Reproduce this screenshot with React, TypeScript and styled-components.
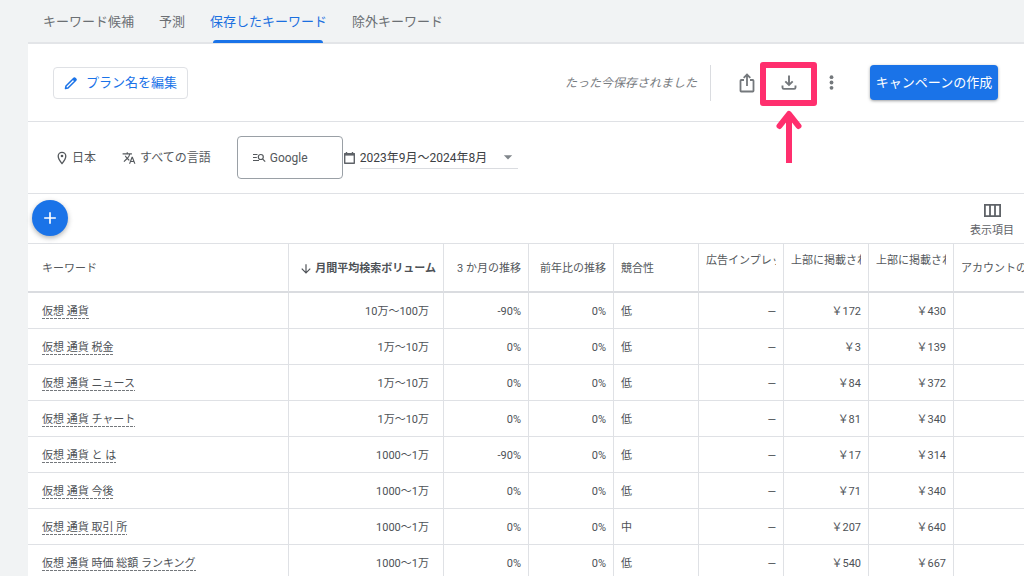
import React from "react";
import styled, { createGlobalStyle, css } from "styled-components";
import { MdAdd, MdArrowDownward, MdArrowDropDown, MdTranslate } from "react-icons/md";

const GlobalStyle = createGlobalStyle`
  *, *::before, *::after { box-sizing: border-box; }
  html { overflow: hidden; }
  body {
    margin: 0;
    background: #f1f3f4;
    color: #5f6368;
    font-family: Roboto, "Noto Sans CJK JP", sans-serif;
    font-size: 12px;
    line-height: 16px;
  }
  button, select { font: inherit; color: inherit; cursor: pointer; }
  svg { display: block; flex: none; }
`;

const Page = styled.div`
  height: 100vh;
  overflow: hidden;
  padding-left: 28px;
`;

const TabBar = styled.nav`
  display: flex;
  gap: 25px;
  height: 44px;
  padding: 0 15px;
  border-bottom: 2px solid #e3e5e8;
`;

const Tab = styled.a<{ $active?: boolean }>`
  position: relative;
  padding: 14px 0 12px;
  font-size: 13px;
  color: #6b6f73;
  text-decoration: none;
  white-space: nowrap;
  ${({ $active }) =>
    $active &&
    css`
      color: #1a6fe0;
      &::after {
        content: "";
        position: absolute;
        left: 3px;
        right: 4px;
        bottom: -1px;
        height: 3px;
        border-radius: 3px 3px 0 0;
        background: #1a73e8;
      }
    `}
`;

const Panel = styled.main`
  background: #fff;
`;

const Bar = styled.div<{ $height: number }>`
  display: flex;
  align-items: center;
  height: ${({ $height }) => $height}px;
  border-bottom: 1px solid #dfe1e5;
`;

const PlanBar = styled(Bar)`
  padding: 0 26px 0 25px;
`;

const FilterBar = styled(Bar)`
  padding: 0 28px;
`;

const ActionBar = styled(Bar)`
  justify-content: space-between;
  align-items: flex-start;
  padding: 6px 10px 0 4px;
`;

const EditButton = styled.button`
  display: flex;
  align-items: center;
  gap: 8px;
  height: 32px;
  padding: 0 10px;
  border: 1px solid #dfe1e5;
  border-radius: 4px;
  background: #fff;
  color: #1a73e8;
  font-size: 13px;
`;

const SavedNote = styled.em`
  margin-left: auto;
  padding-right: 13px;
  color: #777b7f;
  white-space: nowrap;
`;

const PlanTools = styled.div`
  display: flex;
  align-items: center;
  gap: 18px;
  height: 36px;
  padding: 0 27px 0 24px;
  border-left: 1px solid #dadce0;
`;

const IconButton = styled.button`
  display: flex;
  align-items: center;
  justify-content: center;
  width: 24px;
  height: 24px;
  padding: 0;
  border: 0;
  background: none;
  color: #74787c;
`;

const Highlighted = styled.div`
  position: relative;
`;

const HighlightBox = styled.div`
  position: absolute;
  top: -9px;
  left: -17px;
  width: 57px;
  height: 44px;
  border: 6px solid #ff2f6e;
  border-radius: 3px;
  pointer-events: none;
`;

const HighlightArrow = styled.svg`
  position: absolute;
  top: 39px;
  left: -2px;
  pointer-events: none;
`;

const CreateButton = styled.button`
  height: 35px;
  width: 128px;
  padding: 0;
  border: 0;
  border-radius: 4px;
  background: #1a73e8;
  color: #fff;
  font-size: 13px;
  white-space: nowrap;
  box-shadow: 0 1px 3px rgba(60, 64, 67, 0.5);
`;

const FilterButton = styled.button`
  display: flex;
  align-items: center;
  gap: 4px;
  margin-right: 26px;
  padding: 0;
  border: 0;
  background: none;
  color: #54585c;
  white-space: nowrap;
`;

const NetworkButton = styled(FilterButton)`
  width: 106px;
  height: 43px;
  margin-right: 0;
  padding: 0 15px;
  border: 1px solid #9aa0a6;
  border-radius: 4px;
`;

const DateField = styled.label`
  display: flex;
  align-items: center;
  gap: 4px;
`;

const DateSelectBox = styled.span`
  position: relative;
  display: flex;
  align-items: center;
  width: 158px;
  border-bottom: 1px solid #dadce0;
  svg {
    position: absolute;
    right: 0;
    color: #80868b;
    pointer-events: none;
  }
`;

const DateSelect = styled.select`
  appearance: none;
  width: 100%;
  height: 21px;
  padding: 1px 0 0;
  border: 0;
  background: none;
  color: #3c4043;
`;

const AddButton = styled.button`
  display: flex;
  align-items: center;
  justify-content: center;
  width: 36px;
  height: 36px;
  padding: 0;
  border: 0;
  border-radius: 50%;
  background: #1a73e8;
  color: #fff;
  box-shadow: 0 2px 5px rgba(60, 64, 67, 0.4);
`;

const ColumnsButton = styled.button`
  display: flex;
  flex-direction: column;
  align-items: center;
  gap: 6px;
  padding: 4px 0 0;
  border: 0;
  background: none;
  font-size: 11px;
`;

const Table = styled.table`
  width: 100%;
  table-layout: fixed;
  border-collapse: separate;
  border-spacing: 0;
  font-size: 11px;
`;

type Align = "left" | "right";

const HeadCell = styled.th<{ $align: Align; $strong?: boolean }>`
  height: 49px;
  padding: 2px 7px 0;
  overflow: hidden;
  border-bottom: 2px solid #dadce0;
  border-left: 1px solid #dfe1e5;
  text-align: ${({ $align }) => $align};
  font-weight: ${({ $strong }) => ($strong ? 700 : 400)};
  color: ${({ $strong }) => ($strong ? "#4d5156" : "#54585c")};
  white-space: nowrap;
  &:first-child {
    padding-left: 14px;
    border-left: 0;
  }
`;

const HeadLabel = styled.span`
  display: flex;
  align-items: center;
  justify-content: flex-end;
  gap: 2px;
`;

const TallLabel = styled.span`
  display: block;
  height: 32px;
  overflow: hidden;
  text-align: left;
`;

const Cell = styled.td<{ $align: Align; $inset?: boolean }>`
  height: 36px;
  padding: 2px ${({ $inset }) => ($inset ? 14 : 7)}px 0 7px;
  border-bottom: 1px solid #dfe1e5;
  border-left: 1px solid #dfe1e5;
  text-align: ${({ $align }) => $align};
  color: #4d5156;
  white-space: nowrap;
  &:first-child {
    padding-left: 14px;
    border-left: 0;
  }
`;

const Keyword = styled.span`
  display: inline-block;
  line-height: 14px;
  background: repeating-linear-gradient(90deg, #74787c 0 3px, transparent 3px 4px) left bottom / 100% 1px no-repeat;
`;

const PencilIcon = () => (
  <svg width="14" height="14" viewBox="0 0 14 14" fill="none" stroke="currentColor" strokeWidth="1.500">
    <path d="M1.500 12.500L2 10L9.800 2.200Q10.400 1.600 11 2.200L11.800 3Q12.400 3.600 11.800 4.200L4 12Z" strokeLinejoin="round" />
    <path d="M9.300 2.700L11.300 4.700" strokeWidth="2.600" />
  </svg>
);

const ShareIcon = () => (
  <svg width="16" height="20" viewBox="0 0 16 20" fill="none" stroke="currentColor" strokeWidth="1.800">
    <path d="M5 7H2.200Q1.500 7 1.500 7.700V17.800Q1.500 18.500 2.200 18.500H13.800Q14.500 18.500 14.500 17.800V7.700Q14.500 7 13.800 7H11" />
    <path d="M8 13V2M4.700 4.900L8 1.600L11.300 4.900" />
  </svg>
);

const DownloadIcon = () => (
  <svg width="16" height="16" viewBox="0 0 16 16" fill="none" stroke="currentColor" strokeWidth="1.900">
    <path d="M8 0.500V10M4.300 6.300L8 10L11.700 6.300" />
    <path d="M1.500 10.600V12.600Q1.500 13.900 2.800 13.900H13.200Q14.500 13.900 14.500 12.600V10.600" />
  </svg>
);

const MoreIcon = () => (
  <svg width="6" height="16" viewBox="0 0 6 16" fill="currentColor">
    <circle cx="3.500" cy="2.200" r="1.900" />
    <circle cx="3.500" cy="7.500" r="1.900" />
    <circle cx="3.500" cy="12.800" r="1.900" />
  </svg>
);

const PinIcon = () => (
  <svg width="12" height="14" viewBox="0 0 12 14" fill="none" stroke="currentColor" strokeWidth="1.300">
    <path d="M6 12.600C3.400 9.600 2.200 7.200 2.200 5.100A3.800 3.800 0 0 1 9.800 5.100C9.800 7.200 8.600 9.600 6 12.600Z" />
    <circle cx="6" cy="5" r="1.300" fill="currentColor" stroke="none" />
  </svg>
);

const CalendarIcon = () => (
  <svg width="13" height="14" viewBox="0 0 13 14" fill="none" stroke="currentColor" strokeWidth="1.400">
    <path d="M1.700 2.700H11.300V12.300H1.700Z" strokeLinejoin="round" />
    <path d="M1.500 3.400H11.500" strokeWidth="2.400" />
    <path d="M3.500 1V3M9.500 1V3" />
  </svg>
);

const NetworkIcon = () => (
  <svg width="13" height="10" viewBox="0 0 13 10" fill="none" stroke="currentColor" strokeWidth="1.200">
    <path d="M0 1.500H4.500M0 4.500H3.800M0 7.500H6" />
    <circle cx="7.800" cy="4" r="2.500" />
    <path d="M9.500 5.800L12.200 8.600" />
  </svg>
);

const ColumnsIcon = () => (
  <svg width="17" height="13" viewBox="0 0 17 13" fill="none" stroke="currentColor" strokeWidth="1.800">
    <path d="M0.900 0.900H16.100V12.100H0.900ZM6 0.900V12.100M11 0.900V12.100" />
  </svg>
);

const tabs = ["キーワード候補", "予測", "保存したキーワード", "除外キーワード"];
const activeTab = "保存したキーワード";

const columnWidths = [260, 155, 85, 85, 85, 85, 85, 85];

const rows = [
  ["仮想 通貨", "10万〜100万", "-90%", "0%", "低", "\uFFE5172", "\uFFE5430"],
  ["仮想 通貨 税金", "1万〜10万", "0%", "0%", "低", "\uFFE53", "\uFFE5139"],
  ["仮想 通貨 ニュース", "1万〜10万", "0%", "0%", "低", "\uFFE584", "\uFFE5372"],
  ["仮想 通貨 チャート", "1万〜10万", "0%", "0%", "低", "\uFFE581", "\uFFE5340"],
  ["仮想 通貨 と は", "1000〜1万", "-90%", "0%", "低", "\uFFE517", "\uFFE5314"],
  ["仮想 通貨 今後", "1000〜1万", "0%", "0%", "低", "\uFFE571", "\uFFE5340"],
  ["仮想 通貨 取引 所", "1000〜1万", "0%", "0%", "中", "\uFFE5207", "\uFFE5640"],
  ["仮想 通貨 時価 総額 ランキング", "1000〜1万", "0%", "0%", "低", "\uFFE5540", "\uFFE5667"],
];

export default function App() {
  return (
    <Page>
      <GlobalStyle />
      <TabBar>
        {tabs.map((tab) => (
          <Tab key={tab} href="#" $active={tab === activeTab}>
            {tab}
          </Tab>
        ))}
      </TabBar>
      <Panel>
        <PlanBar $height={78}>
          <EditButton>
            <PencilIcon />
            プラン名を編集
          </EditButton>
          <SavedNote>たった今保存されました</SavedNote>
          <PlanTools>
            <IconButton aria-label="共有">
              <ShareIcon />
            </IconButton>
            <Highlighted>
              <IconButton aria-label="ダウンロード">
                <DownloadIcon />
              </IconButton>
              <HighlightBox />
              <HighlightArrow
                width="28"
                height="53"
                viewBox="0 0 28 53"
                fill="none"
                stroke="#ff2f6e"
                strokeWidth="6"
              >
                <path d="M14 53V5" />
                <path d="M4.500 16L14 4L23.500 16" strokeLinecap="round" strokeLinejoin="round" />
              </HighlightArrow>
            </Highlighted>
            <IconButton aria-label="その他">
              <MoreIcon />
            </IconButton>
          </PlanTools>
          <CreateButton>キャンペーンの作成</CreateButton>
        </PlanBar>

        <FilterBar $height={72}>
          <FilterButton>
            <PinIcon />
            <span>日本</span>
          </FilterButton>
          <FilterButton>
            <MdTranslate size={14} />
            <span>すべての言語</span>
          </FilterButton>
          <NetworkButton>
            <NetworkIcon />
            Google
          </NetworkButton>
          <DateField>
            <CalendarIcon />
            <DateSelectBox>
              <DateSelect aria-label="期間">
                <option>2023年9月〜2024年8月</option>
              </DateSelect>
              <MdArrowDropDown size={20} />
            </DateSelectBox>
          </DateField>
        </FilterBar>

        <ActionBar $height={50}>
          <AddButton aria-label="追加">
            <MdAdd size={20} />
          </AddButton>
          <ColumnsButton>
            <ColumnsIcon />
            表示項目
          </ColumnsButton>
        </ActionBar>

        <Table>
          <colgroup>
            {columnWidths.map((width, i) => (
              <col key={i} width={width} />
            ))}
            <col />
          </colgroup>
          <thead>
            <tr>
              <HeadCell $align="left">キーワード</HeadCell>
              <HeadCell $align="right" $strong>
                <HeadLabel>
                  <MdArrowDownward size={14} />
                  月間平均検索ボリューム
                </HeadLabel>
              </HeadCell>
              <HeadCell $align="right">3 か月の推移</HeadCell>
              <HeadCell $align="right">前年比の推移</HeadCell>
              <HeadCell $align="left">競合性</HeadCell>
              <HeadCell $align="left">
                <TallLabel>広告インプレッ</TallLabel>
              </HeadCell>
              <HeadCell $align="left">
                <TallLabel>上部に掲載され</TallLabel>
              </HeadCell>
              <HeadCell $align="left">
                <TallLabel>上部に掲載され</TallLabel>
              </HeadCell>
              <HeadCell $align="left">アカウントの</HeadCell>
            </tr>
          </thead>
          <tbody>
            {rows.map(([keyword, volume, quarter, year, competition, low, high]) => (
              <tr key={keyword}>
                <Cell $align="left">
                  <Keyword>{keyword}</Keyword>
                </Cell>
                <Cell $align="right" $inset>
                  {volume}
                </Cell>
                <Cell $align="right">{quarter}</Cell>
                <Cell $align="right">{year}</Cell>
                <Cell $align="left">{competition}</Cell>
                <Cell $align="right">—</Cell>
                <Cell $align="right">{low}</Cell>
                <Cell $align="right">{high}</Cell>
                <Cell $align="right" />
              </tr>
            ))}
          </tbody>
        </Table>
      </Panel>
    </Page>
  );
}
